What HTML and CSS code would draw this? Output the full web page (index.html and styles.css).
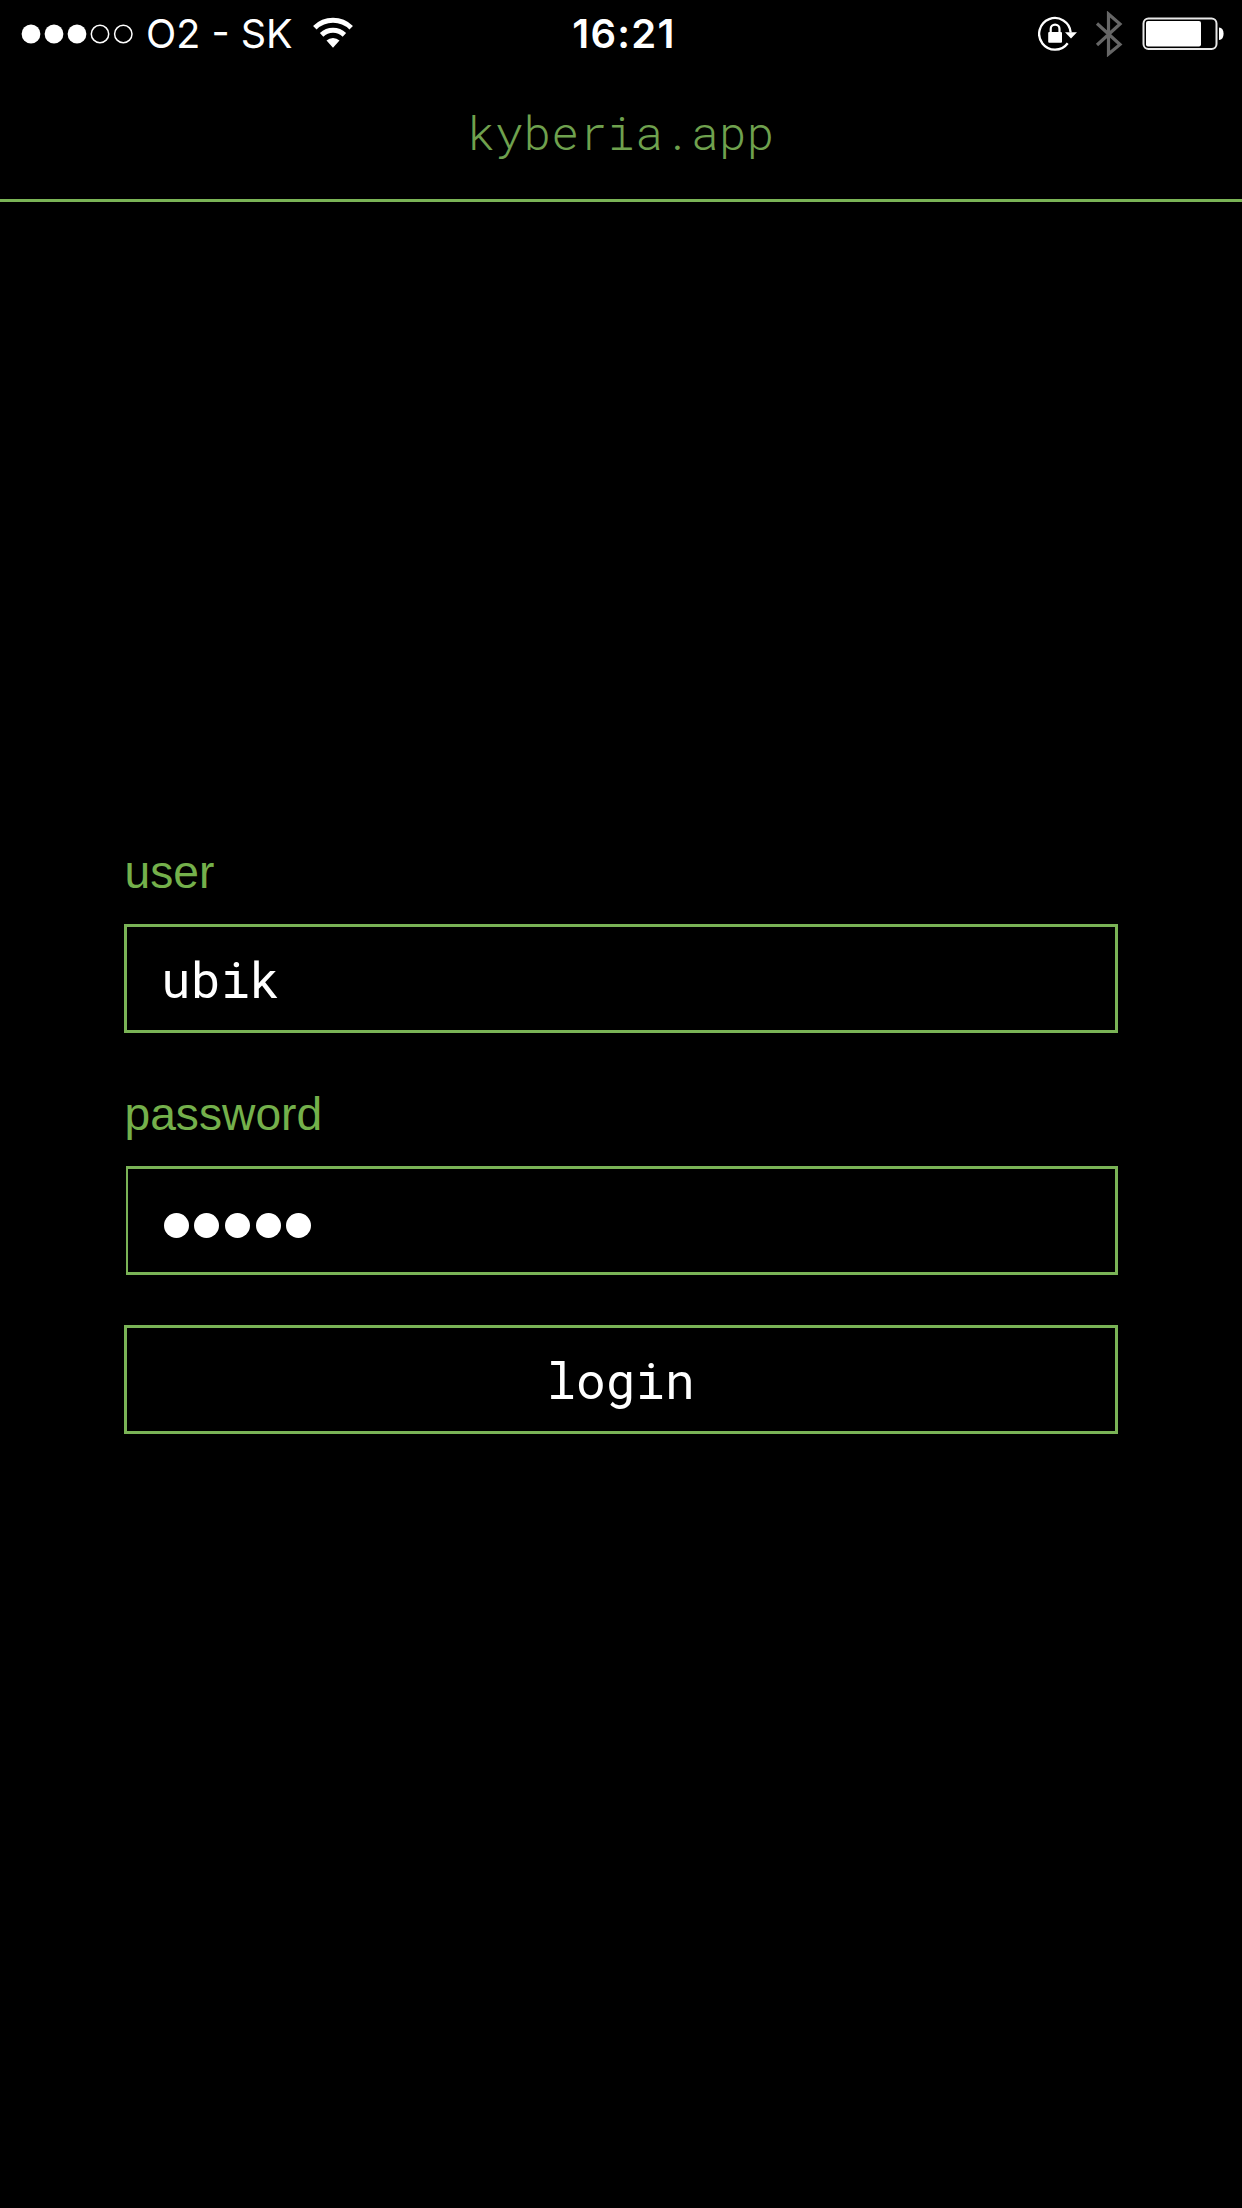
FILE: index.html
```html
<!DOCTYPE html>
<html lang="en">
<head>
<meta charset="utf-8">
<title>kyberia.app</title>
<link rel="stylesheet" href="styles.css">
</head>
<body>
<div class="status">
  <div class="status-left">
    <svg class="signal" width="114" height="20" viewBox="0 0 114 20" fill="#fff">
      <circle cx="10" cy="10" r="9.4"/><circle cx="33" cy="10" r="9.4"/><circle cx="56" cy="10" r="9.4"/>
      <g fill="none" stroke="#fff" stroke-width="1.5"><circle cx="79" cy="10" r="8.7"/><circle cx="102.3" cy="10" r="8.7"/></g>
    </svg>
    <span class="carrier">O2 - SK</span>
    <svg class="wifi" width="40" height="32" viewBox="0 0 40 32">
      <g fill="none" stroke="#fff" stroke-width="5"><path d="M1.8 10.8A26 26 0 0 1 38.200 10.8"/><path d="M8.600 17.900A16.500 16.500 0 0 1 31.400 17.900"/></g>
      <path d="M13.5 23.500A9.5 9.5 0 0 1 26.5 23.500L20 30.700Z" fill="#fff"/>
    </svg>
  </div>
  <div class="clock">16:21</div>
  <div class="status-right">
    <svg width="40" height="36" viewBox="0 0 40 36">
      <path d="M32.7 16.5A15.8 15.8 0 1 0 29.7 27.2" fill="none" stroke="#fff" stroke-width="2.3"/>
      <path d="M27 16.2H39L33 22.5Z" fill="#fff"/>
      <rect x="10.2" y="16" width="13.8" height="10.7" rx="1" fill="#fff"/>
      <path d="M12.7 17V13A4.4 4.4 0 0 1 21.5 13V17" fill="none" stroke="#fff" stroke-width="2.2"/>
    </svg>
    <svg class="bluetooth" width="28" height="46" viewBox="0 0 28 46">
      <path d="M2 12.5L25 33.5L13.5 43V3L25 13L2 34" fill="none" stroke="#666" stroke-width="3.2"/>
    </svg>
    <svg class="battery" width="84" height="34" viewBox="0 0 84 34">
      <rect x="1.5" y="1.5" width="73" height="30.5" rx="5" fill="none" stroke="#e8e8e8" stroke-width="2"/>
      <rect x="4" y="4" width="55" height="25.5" rx="2" fill="#fff"/>
      <path d="M77 10.5Q81.6 11 81.6 16.7T77 23Z" fill="#fff"/>
    </svg>
  </div>
</div>
<header class="header"><h1>kyberia.app</h1></header>
<main class="form">
  <div class="label">user</div>
  <div class="box">ubik</div>
  <div class="label">password</div>
  <div class="box password">
    <i class="dot"></i><i class="dot"></i><i class="dot"></i><i class="dot"></i><i class="dot"></i>
  </div>
  <button class="box login">login</button>
</main>
</body>
</html>
```
FILE: styles.css
```css
* { box-sizing: border-box; }
body {
  margin: 0;
  min-height: 2208px;
  background: #000;
  color: #fff;
  font-family: "Liberation Sans", sans-serif;
}
.status {
  display: grid;
  grid-template-columns: 1fr auto 1fr;
  align-items: center;
  height: 68px;
  padding: 0 16px 0 21px;
  font-family: Inter, sans-serif;
}
.status-left, .status-right { display: flex; align-items: center; }
.status-right { justify-content: flex-end; }
.carrier {
  margin-left: 11px;
  font-size: 39.5px;
  font-weight: 400;
  line-height: 68px;
  white-space: pre;
}
.wifi { margin: 0 0 2px 20px; }
.clock {
  margin-left: 1px;
  font-size: 40px;
  font-weight: 600;
  letter-spacing: 1.3px;
  line-height: 68px;
}
.bluetooth { margin-left: 17px; }
.battery { margin-left: 19px; }
.header {
  height: 134px;
  border-bottom: 3px solid #7ab356;
}
h1 {
  margin: 0;
  padding-top: 38px;
  text-align: center;
  font: 300 46.5px/52px "Roboto Mono", "Liberation Mono", monospace;
  color: #6fa14e;
}
.form {
  display: flex;
  flex-direction: column;
  width: 994px;
  margin: 0 auto;
  padding-top: 644px;
}
.label {
  height: 78px;
  padding-left: 0.5px;
  font-size: 46.2px;
  line-height: 53px;
  color: #74b04b;
}
.box {
  height: 109px;
  padding: 0 34px;
  border: 3px solid #7ab356;
  background: #000;
  color: #fff;
  font: 400 49.5px/103px "Roboto Mono", "Liberation Mono", monospace;
}
.box + .label { margin-top: 55px; }
.password {
  display: flex;
  align-items: center;
  gap: 5.7px;
  margin-left: 2px;
  padding: 10px 0 0 35.5px;
  border-left-width: 2px;
}
.dot { width: 25px; height: 25px; border-radius: 50%; background: #fff; }
.login {
  margin-top: 50px;
  padding: 0 1px 2px 0;
  border-radius: 0;
  text-align: center;
}
```
